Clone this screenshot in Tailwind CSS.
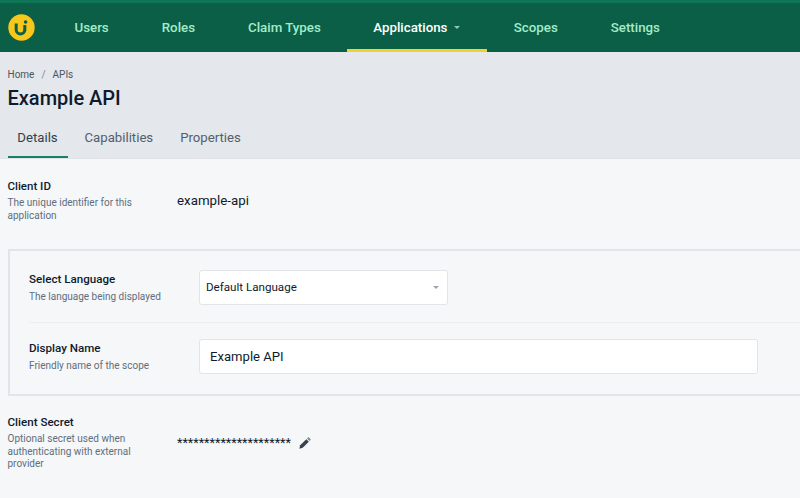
<!DOCTYPE html>
<html lang="en">
<head>
    <meta charset="UTF-8">
    <title>Example API</title>
    <script src="https://cdn.jsdelivr.net/npm/@tailwindcss/browser@4"></script>
</head>
<body class="bg-[#f5f7f9] h-[498px] w-[800px] overflow-hidden font-['Roboto',sans-serif] text-[#0f1b2d]">
    <!-- Navigation -->
    <nav class="h-[52px] bg-[#0b5f47] border-t-[3px] border-[#0f7657] flex items-stretch">
        <div class="w-[48px] flex items-center pl-[7.5px] shrink-0">
            <svg width="27" height="27" viewBox="0 0 27 27">
                <circle cx="13.5" cy="13.5" r="13.2" fill="#f7c71c"/>
                <path d="M8.2 9.5v6.2a4.3 4.3 0 0 0 8.6 0" fill="none" stroke="#0b5f47" stroke-width="3"/>
                <path d="M16.8 11v6" stroke="#0b5f47" stroke-width="3"/>
                <circle cx="17.6" cy="8" r="1.8" fill="#0b5f47"/>
            </svg>
        </div>
        <a class="px-[26.5px] flex items-center text-[13.3px] font-medium text-[#a3ecc8]">Users</a>
        <a class="px-[26.5px] flex items-center text-[13.3px] font-medium text-[#a3ecc8]">Roles</a>
        <a class="px-[26.5px] flex items-center text-[13.3px] font-medium text-[#a3ecc8]">Claim Types</a>
        <a class="w-[140px] pl-[26px] flex items-center text-[13.3px] font-medium text-white border-b-[3px] border-[#f3d02f] pt-[3px]">
            Applications
            <span class="ml-[7px] w-0 h-0 border-x-[3.5px] border-x-transparent border-t-[3.5px] border-t-[#8fc9b0]"></span>
        </a>
        <a class="px-[26.5px] flex items-center text-[13.3px] font-medium text-[#a3ecc8]">Scopes</a>
        <a class="px-[26.5px] flex items-center text-[13.3px] font-medium text-[#a3ecc8]">Settings</a>
    </nav>

    <!-- Page header -->
    <header class="h-[107px] bg-[#e4e7eb] border-b border-[#dfe3e8] pl-[7.5px] pt-[16px]">
        <div class="flex text-[10px] leading-[14px] text-[#4b5563]">
            <span>Home</span><span class="mx-[7px] text-[#7b8794]">/</span><span>APIs</span>
        </div>
        <h1 class="mt-[2px] text-[20px] leading-[28px] font-medium">Example API</h1>
        <div class="mt-[8px] flex text-[13.2px] leading-[20px] text-[#52606d]">
            <a class="w-[60px] h-[38px] pt-[8px] text-center text-[#323f4b] border-b-2 border-[#1a8163]">Details</a>
            <a class="ml-[17px] pt-[8px]">Capabilities</a>
            <a class="ml-[27px] pt-[8px]">Properties</a>
        </div>
    </header>

    <!-- Main Content -->
    <main class="pl-[7.5px]">
        <div class="flex pt-[19px] h-[90px]">
            <div class="w-[169.5px] shrink-0">
                <div class="text-[11.5px] leading-[16px] font-medium">Client ID</div>
                <p class="mt-[3px] w-[135px] text-[10px] leading-[12.5px] text-[#616e7c]">The unique identifier for this application</p>
            </div>
            <div class="text-[13.3px] leading-[16px] mt-[15px]">example-api</div>
        </div>

        <section class="border-2 border-r-0 border-[#e1e4e8] h-[147px] pl-[19.5px] pt-[19px]">
            <div class="flex h-[53px] border-b border-[#eceef0]">
                <div class="w-[170px] shrink-0">
                    <div class="text-[11.6px] leading-[16px] font-medium pt-[1px]">Select Language</div>
                    <p class="mt-[3px] text-[10px] leading-[14px] text-[#616e7c]">The language being displayed</p>
                </div>
                <div class="w-[249px] h-[35px] bg-white border border-[#e1e4e8] rounded-[3px] flex items-center justify-between pl-[6px] pr-[8px] text-[11.6px]">
                    Default Language
                    <span class="w-0 h-0 border-x-[3.5px] border-x-transparent border-t-[3.5px] border-t-[#9aa5b1]"></span>
                </div>
            </div>
            <div class="flex pt-[16px]">
                <div class="w-[170px] shrink-0">
                    <div class="text-[11.6px] leading-[16px] font-medium pt-[1px]">Display Name</div>
                    <p class="mt-[3px] text-[10px] leading-[14px] text-[#616e7c]">Friendly name of the scope</p>
                </div>
                <div class="w-[559px] h-[35px] bg-white border border-[#e1e4e8] rounded-[3px] flex items-center pl-[10px] text-[13.1px]">Example API</div>
            </div>
        </section>

        <div class="flex pt-[18px]">
            <div class="w-[169.5px] shrink-0">
                <div class="text-[11.6px] leading-[16px] font-medium">Client Secret</div>
                <p class="mt-[3px] w-[135px] text-[10px] leading-[12.5px] text-[#616e7c]">Optional secret used when authenticating with external provider</p>
            </div>
            <div class="flex items-start mt-[21px]">
                <span class="text-[12.6px] leading-[16px]">*********************</span>
                <svg class="ml-[8px] mt-[2px]" width="12" height="12" viewBox="0 0 12 12">
                    <path d="M0.3 11.7l0.9-3.4 6.1-6.1 2.5 2.5-6.1 6.1z" fill="#374151"/>
                    <path d="M8 1.5l0.9-0.9a0.8 0.8 0 0 1 1.1 0l1.4 1.4a0.8 0.8 0 0 1 0 1.1l-0.9 0.9z" fill="#7b8794"/>
                </svg>
            </div>
        </div>
    </main>
</body>
</html>
